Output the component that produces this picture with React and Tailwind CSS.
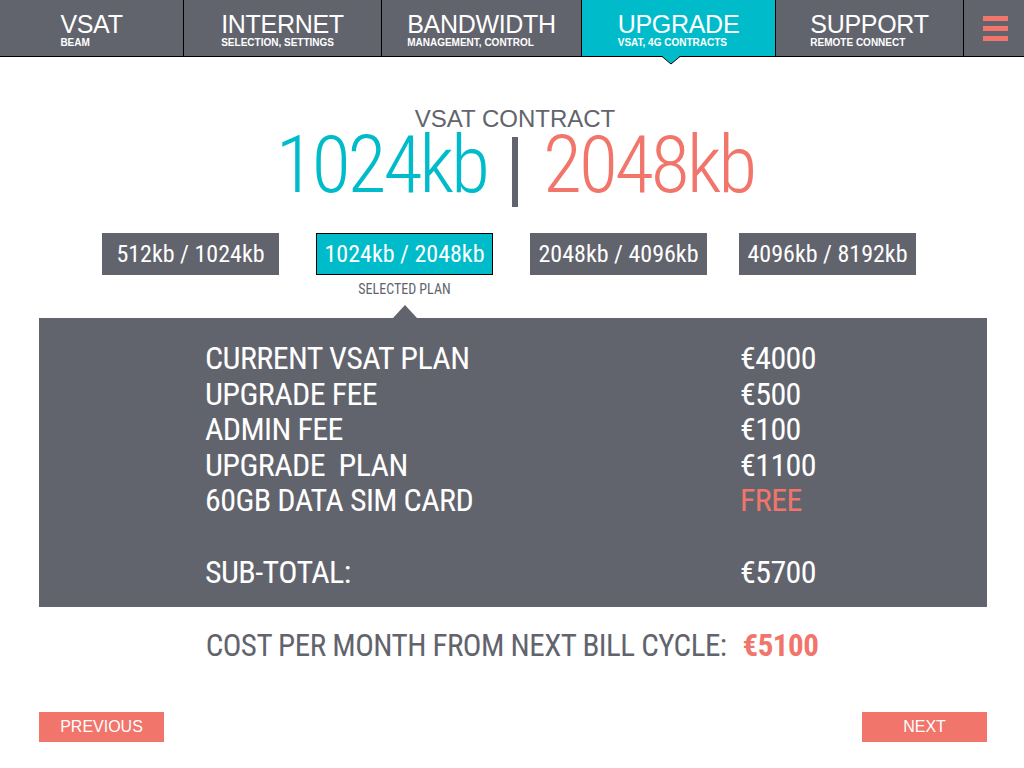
import React from 'react';

const NAV = [
  { title: 'VSAT', sub: 'BEAM', w: 'w-[184px]' },
  { title: 'INTERNET', sub: 'SELECTION, SETTINGS', w: 'w-[198px]' },
  { title: 'BANDWIDTH', sub: 'MANAGEMENT, CONTROL', w: 'w-[200px]' },
  { title: 'UPGRADE', sub: 'VSAT, 4G CONTRACTS', w: 'w-[194px]', active: true },
  { title: 'SUPPORT', sub: 'REMOTE CONNECT', w: 'w-[188px]' },
];

const PLANS = [
  { label: '512kb / 1024kb', ml: 'ml-[102px]' },
  { label: '1024kb / 2048kb', ml: 'ml-[37px]', selected: true },
  { label: '2048kb / 4096kb', ml: 'ml-[37px]' },
  { label: '4096kb / 8192kb', ml: 'ml-[32px]' },
];

const ROWS = [
  ['CURRENT VSAT PLAN', '€4000'],
  ['UPGRADE FEE', '€500'],
  ['ADMIN FEE', '€100'],
  ['UPGRADE\u00a0 PLAN', '€1100'],
  ['60GB DATA SIM CARD', 'FREE', true],
];

// condensed face (Roboto variable, wdth axis)
const cond = "font-['Roboto',sans-serif] [font-stretch:condensed]";

export default function App() {
  return (
    <div className="w-[1024px] h-[768px] bg-white font-['Liberation_Sans',Arial,sans-serif] overflow-hidden">
      {/* top nav */}
      <div className="flex h-[57px] bg-[#62646d] border-b border-black">
        {NAV.map(n => (
          <div
            key={n.title}
            className={`relative ${n.w} h-full border-r border-black flex justify-center items-center ${n.active ? 'bg-[#00bcca]' : ''}`}
          >
            <div className="flex flex-col text-white pt-[5px]">
              <span className="text-[25px] leading-[24px] tracking-[-0.3px]">{n.title}</span>
              <span className="text-[10px] font-bold leading-[12px] mt-[1px]">{n.sub}</span>
            </div>
            {n.active && (
              <svg className="absolute left-[80px] top-[56px]" width="18" height="9" viewBox="0 0 18 9">
                <path d="M0 0 L9 8 L18 0 Z" fill="#00bcca" />
                <path d="M0 0.5 L9 8 L18 0.5" fill="none" stroke="#000" strokeWidth="1" />
              </svg>
            )}
          </div>
        ))}
        <div className="flex-1 flex flex-col items-center justify-center gap-[5px] pl-[2px]">
          <div className="w-[25px] h-[5px] bg-[#f1756b]" />
          <div className="w-[25px] h-[5px] bg-[#f1756b]" />
          <div className="w-[25px] h-[5px] bg-[#f1756b]" />
        </div>
      </div>

      {/* heading */}
      <div className="flex flex-col items-center mt-[49px] pl-[6px]">
        <div className="text-[24px] leading-[26px] text-[#62646d]">VSAT CONTRACT</div>
        <div className={`${cond} font-light flex items-start text-[80px] leading-[60px] tracking-[-3px] mt-[3px]`}>
          <span className="text-[#00bcca]">1024kb</span>
          <span className="w-[6px] h-[70px] bg-[#62646d] ml-[25px] mr-[25px] mt-[2px]" />
          <span className="text-[#f1756b]">2048kb</span>
        </div>
      </div>

      {/* plan selector */}
      <div className={`${cond} flex mt-[26px]`}>
        {PLANS.map(p => (
          <div key={p.label} className={`${p.ml} flex flex-col items-center`}>
            <div
              className={`w-[177px] h-[42px] flex items-center justify-center text-white text-[24px] ${
                p.selected ? 'bg-[#00bcca] border border-black' : 'bg-[#62646d]'
              }`}
            >
              {p.label}
            </div>
            {p.selected && (
              <>
                <div className="text-[14px] text-[#62646d] mt-[7px] leading-[14px]">SELECTED PLAN</div>
                <div className="w-0 h-0 border-l-[12px] border-r-[12px] border-b-[13px] border-l-transparent border-r-transparent border-b-[#62646d] mt-[9px]" />
              </>
            )}
          </div>
        ))}
      </div>

      {/* summary panel */}
      <div className={`${cond} ml-[39px] mr-[37px] h-[289px] bg-[#62646d] text-white text-[32px] leading-[35.5px] tracking-[-0.6px] pl-[166px] pt-[23px]`}>
        {ROWS.map(([label, value, free]) => (
          <div key={label} className="flex">
            <span className="w-[535px]">{label}</span>
            <span className={free ? 'text-[#f1756b]' : ''}>{value}</span>
          </div>
        ))}
        <div className="h-[36px]" />
        <div className="flex">
          <span className="w-[535px]">SUB-TOTAL:</span>
          <span>€5700</span>
        </div>
      </div>

      {/* monthly cost */}
      <div className={`${cond} flex justify-center mt-[21px] text-[31px] leading-[36px] tracking-[-0.5px] text-[#62646d]`}>
        <span>COST PER MONTH FROM NEXT BILL CYCLE:</span>
        <span className="ml-[16px] font-bold text-[#f1756b]">€5100</span>
      </div>

      {/* footer buttons */}
      <div className="flex justify-between ml-[39px] mr-[37px] mt-[48px]">
        <button className="w-[125px] h-[30px] bg-[#f1756b] text-white text-[16px]">PREVIOUS</button>
        <button className="w-[125px] h-[30px] bg-[#f1756b] text-white text-[16px]">NEXT</button>
      </div>
    </div>
  );
}
